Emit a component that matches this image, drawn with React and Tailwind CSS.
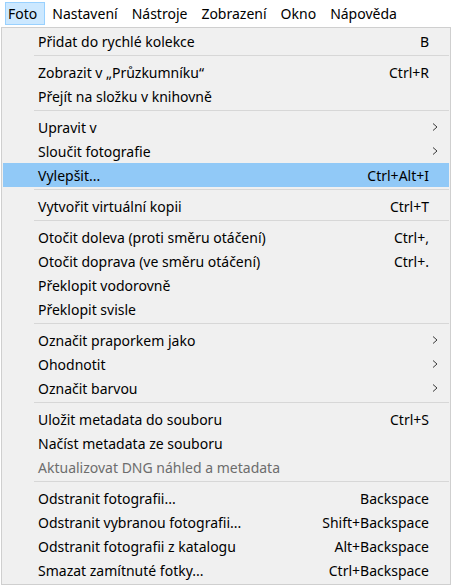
const menuBar = ["Foto", "Nastavení", "Nástroje", "Zobrazení", "Okno", "Nápověda"];

// null = separator
const items = [
  { label: "Přidat do rychlé kolekce", key: "B" },
  null,
  { label: "Zobrazit v „Průzkumníku“", key: "Ctrl+R" },
  { label: "Přejít na složku v knihovně" },
  null,
  { label: "Upravit v", sub: true },
  { label: "Sloučit fotografie", sub: true },
  { label: "Vylepšit...", key: "Ctrl+Alt+I", active: true },
  null,
  { label: "Vytvořit virtuální kopii", key: "Ctrl+T" },
  null,
  { label: "Otočit doleva (proti směru otáčení)", key: "Ctrl+," },
  { label: "Otočit doprava (ve směru otáčení)", key: "Ctrl+." },
  { label: "Překlopit vodorovně" },
  { label: "Překlopit svisle" },
  null,
  { label: "Označit praporkem jako", sub: true },
  { label: "Ohodnotit", sub: true },
  { label: "Označit barvou", sub: true },
  null,
  { label: "Uložit metadata do souboru", key: "Ctrl+S" },
  { label: "Načíst metadata ze souboru" },
  { label: "Aktualizovat DNG náhled a metadata", disabled: true },
  null,
  { label: "Odstranit fotografii...", key: "Backspace" },
  { label: "Odstranit vybranou fotografii...", key: "Shift+Backspace" },
  { label: "Odstranit fotografii z katalogu", key: "Alt+Backspace" },
  { label: "Smazat zamítnuté fotky...", key: "Ctrl+Backspace" },
];

const Chevron = () => (
  <svg width="6" height="10" viewBox="0 0 6 10" className="shrink-0">
    <polyline points="1,1.5 5,5 1,8.5" fill="none" stroke="#3a3a3a" strokeWidth="1" />
  </svg>
);

export default function App() {
  return (
    <div
      className="w-[451px] h-[585px] bg-white overflow-hidden text-[14px] text-black"
      style={{ fontFamily: '"Noto Sans", "Open Sans", sans-serif' }}
    >
      {/* menu bar */}
      <div className="flex h-[27px] items-start pt-[2px] pl-[5px]">
        {menuBar.map((m, i) => (
          <div
            key={m}
            className={
              i === 0
                ? "h-[23px] flex items-center pl-[2px] pr-[7px] bg-[#cce8ff] border border-[#99d1ff]"
                : "h-[23px] flex items-center px-[7px]"
            }
          >
            {m}
          </div>
        ))}
      </div>

      {/* dropdown */}
      <div className="ml-px h-[558px] bg-[#f0f0f0] border border-[#cfcfcf] px-px pt-px">
        {items.map((it, i) =>
          it === null ? (
            <div key={i} className="h-[7px] pt-[2px] pl-[31px]">
              <div className="h-px bg-[#d7d7d7]" />
            </div>
          ) : (
            <div
              key={i}
              className={`h-[24px] flex items-center pl-[35px] pr-[11px] ${
                it.active ? "bg-[#91c9f7]" : ""
              } ${it.disabled ? "text-[#6d6d6d]" : ""}`}
            >
              <span className="flex-1 whitespace-nowrap">{it.label}</span>
              {it.key && <span className="pr-[9px] whitespace-nowrap">{it.key}</span>}
              {it.sub && <Chevron />}
            </div>
          )
        )}
      </div>
    </div>
  );
}
